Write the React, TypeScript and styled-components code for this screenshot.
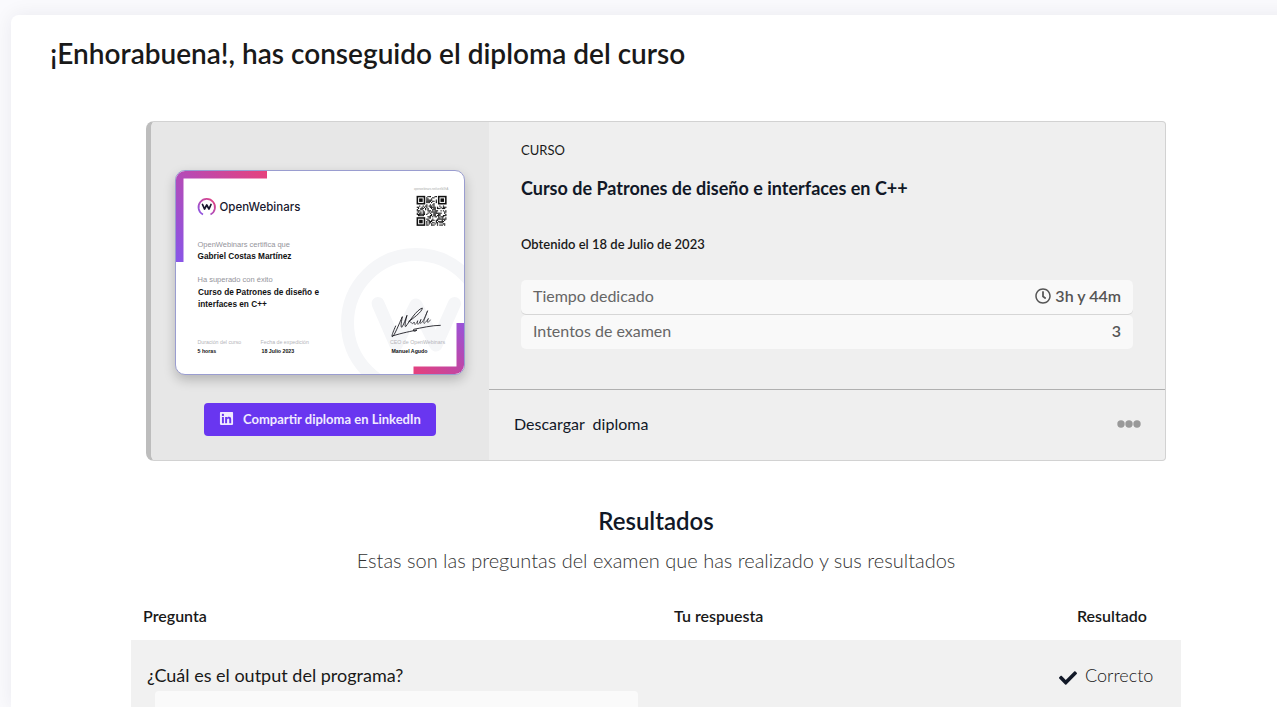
import React from "react";
import styled, { createGlobalStyle } from "styled-components";
import { FaCheck, FaLinkedin, FaRegClock } from "react-icons/fa";

const GlobalStyle = createGlobalStyle`
  *, *::before, *::after { box-sizing: border-box; }
  body {
    margin: 0;
    background: #fafafd;
    color: #111827;
    font-family: Lato, "Liberation Sans", sans-serif;
    font-size: 16px;
    line-height: 24px;
  }
  h1, h2, h3, p, dl, dd { margin: 0; }
`;

const Page = styled.main`
  display: flex;
  min-height: 100vh;
  overflow: hidden;
  padding: 15px 0 0 11px;
`;

const Sheet = styled.section`
  flex: 1;
  margin-right: -24px;
  padding: 20px 39px 0;
  background: #fff;
  border-radius: 8px 0 0 0;
  box-shadow: 0 0 20px rgba(20, 20, 50, 0.07);
`;

const Title = styled.h1`
  font-size: 28px;
  line-height: 36px;
  font-weight: 600;
  color: #191919;
`;

const Content = styled.div`
  max-width: 1050px;
  margin: 50px auto 0;
`;

const DiplomaCard = styled.article`
  display: grid;
  grid-template-columns: 1fr 2fr;
  margin: 0 15px;
  min-height: 340px;
  overflow: hidden;
  background: #efefef;
  border: 1px solid #d2d2d2;
  border-left: 5px solid #bdbdbd;
  border-radius: 8px 4px 4px 8px;
`;

const Preview = styled.div`
  display: flex;
  flex-direction: column;
  align-items: center;
  gap: 28px;
  padding: 48px 24px 24px;
  background: #e7e7e7;
`;

const Certificate = styled.svg`
  display: block;
  width: 100%;
  height: auto;
  background: #fff;
  border: 1px solid #9a9dd0;
  border-radius: 10px;
  box-shadow: 0 5px 12px rgba(0, 0, 0, 0.22);
`;

const ShareButton = styled.button`
  display: flex;
  align-items: center;
  gap: 9px;
  height: 33px;
  padding: 0 15px 2px;
  border: 0;
  border-radius: 4px;
  background: #6936f0;
  color: #f0eaff;
  font: 700 13px/20px Lato, "Liberation Sans", sans-serif;
  white-space: nowrap;
`;

const Details = styled.div`
  display: flex;
  flex-direction: column;
`;

const Summary = styled.div`
  flex: 1;
  padding: 18px 32px 0;
`;

const Kind = styled.p`
  font-size: 13px;
  line-height: 20px;
  color: #191919;
`;

const CourseName = styled.h2`
  margin-top: 16px;
  font-size: 18px;
  line-height: 24px;
  font-weight: 700;
`;

const Obtained = styled.p`
  margin: 34px 0 26px;
  font-size: 13px;
  line-height: 20px;
  font-weight: 600;
  color: #191919;
`;

const Stats = styled.dl`
  display: grid;
  gap: 1px;
`;

const Stat = styled.div`
  display: flex;
  justify-content: space-between;
  height: 34px;
  padding: 4px 12px;
  border-radius: 5px;
  background: #f9f9f9;
  color: #666;
  box-shadow: 0 1px 0 #d6d6d6;
  &:last-child { box-shadow: none; }
`;

const StatValue = styled.dd`
  display: flex;
  align-items: center;
  align-self: flex-start;
  gap: 4px;
  font-weight: 600;
  color: #555;
`;

const Actions = styled.footer`
  display: flex;
  align-items: center;
  justify-content: space-between;
  height: 71px;
  padding: 0 24px 3px 25px;
  border-top: 1px solid #b0b0b0;
`;

const DownloadLink = styled.a`
  color: #111827;
  text-decoration: none;
  white-space: pre;
`;

const MoreButton = styled.button`
  display: flex;
  padding: 0;
  border: 0;
  background: none;
  color: #999;
`;

const ResultsHeader = styled.header`
  margin-top: 44px;
  text-align: center;
`;

const ResultsTitle = styled.h2`
  font-size: 24px;
  line-height: 32px;
  font-weight: 600;
`;

const ResultsText = styled.p`
  margin-top: 8px;
  font-size: 20px;
  line-height: 30px;
  font-weight: 300;
  color: #333;
`;

const ResultsTable = styled.table`
  width: 100%;
  margin-top: 16px;
  table-layout: fixed;
  border-collapse: collapse;
`;

const Heading = styled.th<{ $width?: string; $center?: boolean }>`
  width: ${(p) => p.$width ?? "auto"};
  height: 49px;
  padding: 0 12px;
  font-weight: 600;
  color: #191919;
  text-align: ${(p) => (p.$center ? "center" : "left")};
`;

const Cell = styled.td`
  padding: 20px 16px 0;
  vertical-align: top;
  background: #f1f1f1;
  font-size: 18px;
  line-height: 31px;
  color: #191919;
`;

const CodeBlock = styled.div`
  margin: 0 8px;
  height: 16px;
  border-radius: 4px 4px 0 0;
  background: #fafafa;
`;

const Outcome = styled.div`
  display: flex;
  align-items: center;
  gap: 8px;
  font-weight: 300;
  svg {
    margin-top: 4px;
    color: #111827;
  }
`;

const QR_SIZE = 25;
const qrModules: [number, number][] = [];
for (let y = 0; y < QR_SIZE; y++) {
  for (let x = 0; x < QR_SIZE; x++) {
    const inFinder = (x < 8 && y < 8) || (x > 16 && y < 8) || (x < 8 && y > 16);
    const hash = (x * 73 + y * 151 + x * y * 37 + ((x * x) ^ (y * 29))) % 11;
    if (!inFinder && hash < 6) qrModules.push([x, y]);
  }
}

const QrCode = () => (
  <g transform="translate(967 104) scale(4.75)" fill="#111">
    {qrModules.map(([x, y]) => (
      <rect key={`${x}-${y}`} x={x} y={y} width="1" height="1" />
    ))}
    {[[0, 0], [18, 0], [0, 18]].map(([x, y]) => (
      <g key={`${x}-${y}`}>
        <rect x={x + 0.5} y={y + 0.5} width="6" height="6" fill="none" stroke="#111" strokeWidth="1.3" />
        <rect x={x + 2} y={y + 2} width="3" height="3" />
      </g>
    ))}
  </g>
);

const DiplomaImage = () => (
  <Certificate viewBox="4 4 1152 812" role="img" aria-label="Diploma" fontFamily="'Liberation Sans', sans-serif">
    <defs>
      <linearGradient id="corner" gradientUnits="userSpaceOnUse" x1="0" y1="370" x2="370" y2="0">
        <stop offset="0" stopColor="#8656ea" />
        <stop offset="0.5" stopColor="#b44bb8" />
        <stop offset="1" stopColor="#e8417a" />
      </linearGradient>
      <linearGradient id="ring" x1="0" y1="1" x2="1" y2="0">
        <stop offset="0" stopColor="#8656ea" />
        <stop offset="1" stopColor="#e8417a" />
      </linearGradient>
      <linearGradient id="cornerEnd" gradientUnits="userSpaceOnUse" x1="950" y1="820" x2="1160" y2="610">
        <stop offset="0" stopColor="#e8417a" />
        <stop offset="0.5" stopColor="#c046a4" />
        <stop offset="1" stopColor="#9753dc" />
      </linearGradient>
    </defs>
    <g fill="none" stroke="#f5f6f8">
      <circle cx="964" cy="612" r="274" strokeWidth="52" />
      <path d="M812 534L884 700L964 540L1044 700L1118 534" strokeWidth="52" strokeLinecap="round" strokeLinejoin="round" />
    </g>
    <path d="M0 0H368V34H34V368H0Z" fill="url(#corner)" />
    <path d="M1160 820H954V786H1126V612H1160Z" fill="url(#cornerEnd)" />
    <path d="M112 178A33 33 0 1 1 142 178" fill="none" stroke="url(#ring)" strokeWidth="7" />
    <path d="M110 138L118 156L127 140L136 156L144 138" fill="none" stroke="#18182e" strokeWidth="7" strokeLinecap="round" strokeLinejoin="round" />
    <text x="178" y="164" fontSize="46" fontWeight="500" fill="#18182e" fontFamily="Inter, sans-serif">OpenWebinars</text>
    <text x="956" y="78" fontSize="11" fill="#aaa">openwebinars.net/cert/b3hA</text>
    <QrCode />
    <g fill="#94949b" fontSize="30">
      <text x="90" y="308">OpenWebinars certifica que</text>
      <text x="90" y="446">Ha superado con éxito</text>
    </g>
    <g fill="#b5b5ba" fontSize="21">
      <text x="90" y="694">Duración del curso</text>
      <text x="342" y="694">Fecha de expedición</text>
      <text x="860" y="694">CEO de OpenWebinars</text>
    </g>
    <g fill="#111" fontWeight="700">
      <g fontSize="33">
        <text x="90" y="355">Gabriel Costas Martínez</text>
        <text x="92" y="499">Curso de Patrones de diseño e</text>
        <text x="92" y="548">interfaces en C++</text>
      </g>
      <g fontSize="21">
        <text x="90" y="730">5 horas</text>
        <text x="346" y="730">18 Julio 2023</text>
        <text x="866" y="730">Manuel Agudo</text>
      </g>
    </g>
    <g
      transform="translate(840 520) scale(1.333)"
      fill="none" stroke="#15151c" strokeWidth="2.6" strokeLinecap="round" strokeLinejoin="round"
    >
      <path d="M32 78C26 92 18 110 22 110C28 108 42 72 52 50C50 62 46 80 50 82C56 76 62 56 66 46C62 60 58 80 62 80C74 64 94 30 112 24C112 36 80 58 72 64" />
      <path d="M72 64C82 64 78 78 88 66C86 78 94 74 98 62C94 78 102 76 108 58C100 78 112 76 128 32C122 46 112 72 118 70C126 64 132 52 130 56C124 68 128 72 136 60" strokeWidth="2" />
      <path d="M22 108C54 98 78 94 96 90C90 96 82 94 86 88C108 84 140 76 166 76" />
    </g>
  </Certificate>
);

const MoreIcon = () => (
  <svg width="24" height="8" viewBox="0 0 24 8" fill="currentColor" aria-hidden="true">
    <circle cx="4" cy="4" r="3.7" />
    <circle cx="12" cy="4" r="3.7" />
    <circle cx="20" cy="4" r="3.7" />
  </svg>
);

export default function App() {
  return (
    <Page>
      <GlobalStyle />
      <Sheet>
        <Title>¡Enhorabuena!, has conseguido el diploma del curso</Title>
        <Content>
          <DiplomaCard>
            <Preview>
              <DiplomaImage />
              <ShareButton type="button">
                <FaLinkedin size={15} aria-hidden />
                Compartir diploma en LinkedIn
              </ShareButton>
            </Preview>
            <Details>
              <Summary>
                <Kind>CURSO</Kind>
                <CourseName>Curso de Patrones de diseño e interfaces en C++</CourseName>
                <Obtained>Obtenido el 18 de Julio de 2023</Obtained>
                <Stats>
                  <Stat>
                    <dt>Tiempo dedicado</dt>
                    <StatValue><FaRegClock size={16} aria-hidden />3h y 44m</StatValue>
                  </Stat>
                  <Stat>
                    <dt>Intentos de examen</dt>
                    <StatValue>3</StatValue>
                  </Stat>
                </Stats>
              </Summary>
              <Actions>
                <DownloadLink href="#diploma">{"Descargar  diploma"}</DownloadLink>
                <MoreButton type="button" aria-label="Más opciones"><MoreIcon /></MoreButton>
              </Actions>
            </Details>
          </DiplomaCard>
          <ResultsHeader>
            <ResultsTitle>Resultados</ResultsTitle>
            <ResultsText>Estas son las preguntas del examen que has realizado y sus resultados</ResultsText>
          </ResultsHeader>
          <ResultsTable>
            <thead>
              <tr>
                <Heading>Pregunta</Heading>
                <Heading $width="381px">Tu respuesta</Heading>
                <Heading $width="138px" $center>Resultado</Heading>
              </tr>
            </thead>
            <tbody>
              <tr>
                <Cell>
                  ¿Cuál es el output del programa?
                  <CodeBlock />
                </Cell>
                <Cell />
                <Cell>
                  <Outcome><FaCheck size={18} aria-hidden />Correcto</Outcome>
                </Cell>
              </tr>
            </tbody>
          </ResultsTable>
        </Content>
      </Sheet>
    </Page>
  );
}
